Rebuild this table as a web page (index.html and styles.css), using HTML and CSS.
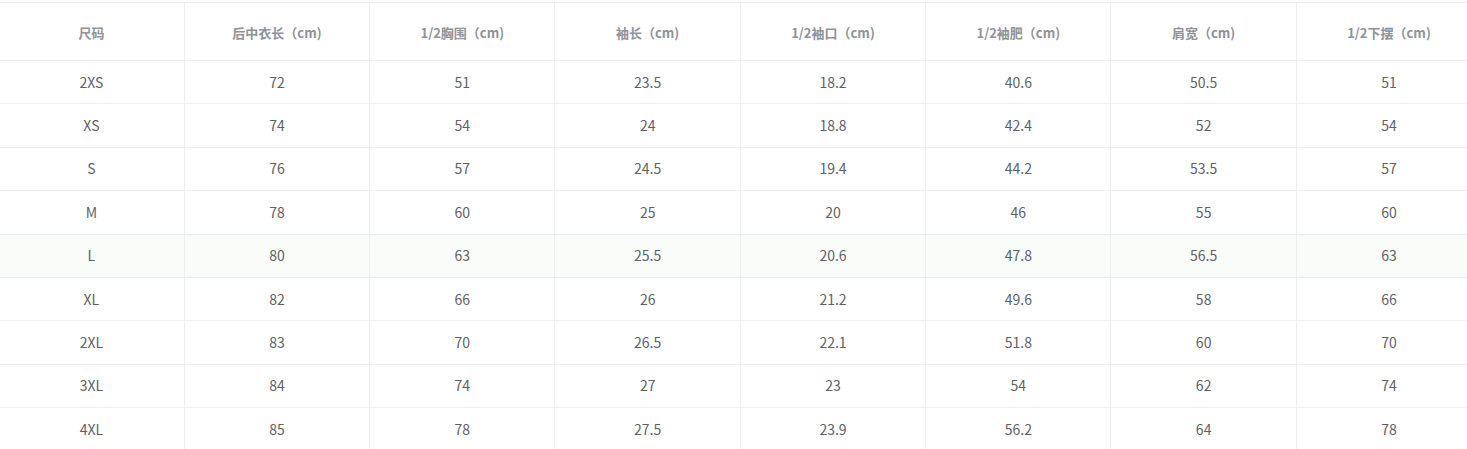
FILE: index.html
```html
<!DOCTYPE html>
<html lang="zh-CN">
<head>
<meta charset="utf-8">
<title>尺码表</title>
<link rel="stylesheet" href="styles.css">
</head>
<body>
<div class="wrap">
<table class="size-table">
<colgroup>
<col class="c"><col class="c"><col class="c"><col class="c"><col class="c"><col class="c"><col class="c"><col class="c">
</colgroup>
<thead>
<tr><th>尺码</th><th>后中衣长（cm)</th><th>1/2胸围（cm)</th><th>袖长（cm)</th><th>1/2袖口（cm)</th><th>1/2袖肥（cm)</th><th>肩宽（cm)</th><th>1/2下摆（cm)</th></tr>
</thead>
<tbody>
<tr><td>2XS</td><td>72</td><td>51</td><td>23.5</td><td>18.2</td><td>40.6</td><td>50.5</td><td>51</td></tr>
<tr><td>XS</td><td>74</td><td>54</td><td>24</td><td>18.8</td><td>42.4</td><td>52</td><td>54</td></tr>
<tr><td>S</td><td>76</td><td>57</td><td>24.5</td><td>19.4</td><td>44.2</td><td>53.5</td><td>57</td></tr>
<tr><td>M</td><td>78</td><td>60</td><td>25</td><td>20</td><td>46</td><td>55</td><td>60</td></tr>
<tr class="hover"><td>L</td><td>80</td><td>63</td><td>25.5</td><td>20.6</td><td>47.8</td><td>56.5</td><td>63</td></tr>
<tr><td>XL</td><td>82</td><td>66</td><td>26</td><td>21.2</td><td>49.6</td><td>58</td><td>66</td></tr>
<tr><td>2XL</td><td>83</td><td>70</td><td>26.5</td><td>22.1</td><td>51.8</td><td>60</td><td>70</td></tr>
<tr><td>3XL</td><td>84</td><td>74</td><td>27</td><td>23</td><td>54</td><td>62</td><td>74</td></tr>
<tr><td>4XL</td><td>85</td><td>78</td><td>27.5</td><td>23.9</td><td>56.2</td><td>64</td><td>78</td></tr>
</tbody>
</table>
</div>
</body>
</html>
```
FILE: styles.css
```css
html, body {
  margin: 0;
  padding: 0;
  background: #ffffff;
  overflow: hidden;
}
.wrap {
  width: 100%;
  overflow: hidden;
  padding-top: 2px;
}
.size-table {
  table-layout: fixed;
  width: 1482.7px;
  margin-left: -1px;
  border-collapse: collapse;
  font-family: "Noto Sans CJK SC", "Liberation Sans", sans-serif;
  font-size: 14px;
}
.size-table .c {
  width: 185.33px;
}
.size-table th,
.size-table td {
  border: 1px solid #ebeef5;
  text-align: center;
  padding: 0;
}
.size-table tr > :first-child {
  border-left: none;
}
.size-table th {
  height: 55px;
  padding-top: 2px;
  color: #909399;
  font-weight: 700;
  font-size: 13px;
}
.size-table td {
  height: 41.4px;
  padding-bottom: 1px;
  color: #5f6166;
}
.size-table tr.hover td {
  background: #fafcfa;
}
```
